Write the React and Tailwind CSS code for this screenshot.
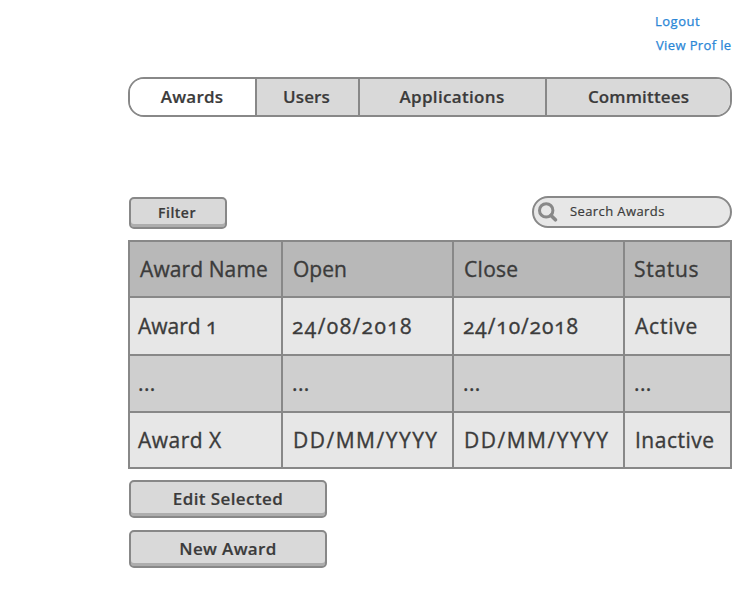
const tabs = [
  { label: "Awards", cls: "w-[127px] border-r-2 bg-white pr-px tracking-[0.2px]" },
  { label: "Users", cls: "w-[103px] border-r-2 bg-[#d9d9d9] pr-[2px] tracking-[0.1px]" },
  { label: "Applications", cls: "w-[187px] border-r-2 bg-[#d9d9d9] pr-px tracking-[0.33px]" },
  { label: "Committees", cls: "w-[183px] bg-[#d9d9d9] tracking-[0.15px]" },
];

const rows = [
  {
    bg: "bg-[#b8b8b8] pt-px",
    cells: [
      ["Award Name", "pl-[10px] tracking-[0.1px]"],
      ["Open", "pl-[10px] tracking-[0px]"],
      ["Close", "pl-[10px] tracking-[0.3px]"],
      ["Status", "pl-[9px] tracking-[0.7px]"],
    ],
  },
  {
    bg: "bg-[#e7e7e7] pt-[2px]",
    cells: [
      ["Award 1", "pl-[8px] tracking-[0px]"],
      ["24/08/2018", "pl-[9px] tracking-[1.4px]"],
      ["24/10/2018", "pl-[9px] tracking-[0.9px]"],
      ["Active", "pl-[10px] tracking-[0.8px]"],
    ],
  },
  {
    bg: "bg-[#cfcfcf]",
    cells: [
      ["...", "pl-[8px] tracking-[0.4px]"],
      ["...", "pl-[9px] tracking-[0.4px]"],
      ["...", "pl-[9px] tracking-[0.4px]"],
      ["...", "pl-[9px] tracking-[0.4px]"],
    ],
  },
  {
    bg: "bg-[#e7e7e7] pt-[2px]",
    cells: [
      ["Award X", "pl-[8px] tracking-[0.5px]"],
      ["DD/MM/YYYY", "pl-[10px] tracking-[1.5px]"],
      ["DD/MM/YYYY", "pl-[10px] tracking-[1.5px]"],
      ["Inactive", "pl-[10px] tracking-[0.5px]"],
    ],
  },
];

function Button({ className, children }) {
  return (
    <button
      className={`flex items-center justify-center rounded-[5px] border-2 border-[#888888] bg-[#d9d9d9] font-semibold shadow-[inset_0_-3px_0_#adadad] [-webkit-text-stroke:0.2px] ${className}`}
    >
      {children}
    </button>
  );
}

export default function App() {
  return (
    <div className="h-[589px] w-[752px] overflow-hidden bg-white pl-[128px] pr-[20px] font-['Open_Sans','Noto_Sans',sans-serif] text-[#3b3b3b]">
      <div className="flex h-[77px] flex-col items-start pl-[527px] pt-[9px] text-[13px] leading-[24px] whitespace-nowrap text-[#2a86d6] [-webkit-text-stroke:0.25px]">
        <a className="tracking-[0.5px]">Logout</a>
        <a className="pl-px tracking-[0.37px]">View Prof le</a>
      </div>
      <nav className="flex h-[40px] overflow-hidden rounded-[16px] border-2 border-[#888888] text-[17px] font-semibold [-webkit-text-stroke:0.2px]">
        {tabs.map((t) => (
          <div key={t.label} className={`flex items-center justify-center border-[#888888] ${t.cls}`}>
            {t.label}
          </div>
        ))}
      </nav>
      <div className="mt-[79px] flex items-start justify-between pl-px">
        <Button className="mt-px h-[32px] w-[98px] pr-[2px] pb-px text-[14px] tracking-[0.5px]">Filter</Button>
        <div className="flex h-[32px] w-[200px] items-center rounded-[16px] border-2 border-[#888888] bg-[#e7e7e7] pl-[4px] text-[13px]">
          <svg width="20" height="20" viewBox="0 0 20 20" fill="none" stroke="#888888">
            <circle cx="8.2" cy="8.4" r="6.7" strokeWidth="3" />
            <path d="M13 13.4L17.4 17.8" strokeWidth="3.6" strokeLinecap="round" />
          </svg>
          <span className="pl-[12px] tracking-[0.4px] [-webkit-text-stroke:0.2px]">Search Awards</span>
        </div>
      </div>
      <div className="mt-[11px] grid h-[229px] grid-cols-[151px_169px_169px_105px] grid-rows-[54px_56px_55px_54px] gap-[2px] border-2 border-[#888888] bg-[#888888] text-[21px] [-webkit-text-stroke:0.35px] [font-feature-settings:'onum']">
        {rows.map((r, i) =>
          r.cells.map(([text, cls], j) => (
            <div key={`${i}-${j}`} className={`flex items-center whitespace-nowrap ${r.bg} ${cls}`}>
              {text}
            </div>
          ))
        )}
      </div>
      <div className="flex flex-col gap-[12px] pl-px pt-[11px] text-[17px]">
        <Button className="h-[38px] w-[198px] tracking-[0.4px]">Edit Selected</Button>
        <Button className="h-[38px] w-[198px] tracking-[0.35px]">New Award</Button>
      </div>
    </div>
  );
}
